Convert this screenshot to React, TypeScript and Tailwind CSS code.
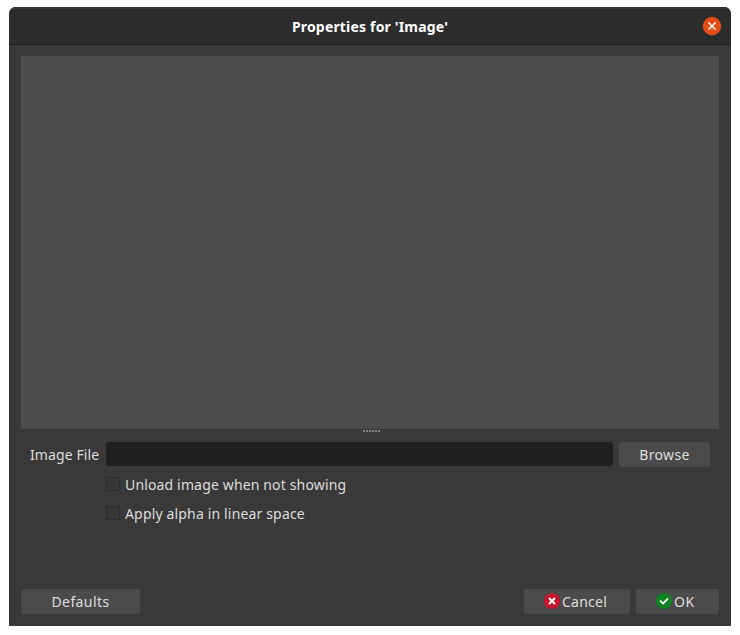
import type { ReactNode } from 'react';

function Button({ className, children }: { className: string; children: ReactNode }) {
  return (
    <button className={`flex h-[25px] shrink-0 items-center rounded-[3px] bg-[#4b4b4b] whitespace-nowrap ${className}`}>
      {children}
    </button>
  );
}

function CheckRow({ label, className }: { label: string; className: string }) {
  return (
    <label className="flex h-[29px] items-center">
      <span className="-mt-px mr-[5px] size-[14px] border border-[#2c2c2c] bg-[#373737]" />
      <span className={`whitespace-nowrap ${className}`}>{label}</span>
    </label>
  );
}

export default function App() {
  return (
    <div className="h-[635px] w-[740px] bg-white pt-[7px] pl-[9px] font-['Noto_Sans','Open_Sans',sans-serif] text-[14px] leading-5 text-[#dedede]">
      <div className="flex h-[619px] w-[722px] flex-col overflow-hidden rounded-t-[7px] bg-[#393939]">
        <header className="flex h-[38px] shrink-0 items-center justify-center border-t-2 border-b border-t-[#373737] border-b-[#212121] bg-[#2c2c2c]">
          <span className="w-[29px]" />
          <h1 className="flex-1 text-center text-[14px] font-bold tracking-[0.18px] text-white">
            Properties for 'Image'
          </h1>
          <button aria-label="Close" className="-mt-px mr-[9px] size-[20px]">
            <svg viewBox="0 0 20 20" className="size-[20px]">
              <circle cx="10" cy="10" r="9.2" fill="#e54c18" />
              <path d="M6.4 6.4l7.2 7.2M13.6 6.4l-7.2 7.2" stroke="#fff" strokeWidth="1.4" />
            </svg>
          </button>
        </header>

        <main className="flex flex-1 flex-col px-3 pt-[11px] pb-3">
          <div className="h-[373px] bg-[#4c4c4c]" />
          <div className="flex h-[13px] justify-center gap-px pt-px pl-[3px]">
            {[0, 1, 2, 3, 4, 5].map((i) => (
              <span key={i} className="size-[2px] bg-[#858585]" />
            ))}
          </div>

          <div className="flex items-start pr-[9px] pl-[9px]">
            <span className="w-[76px] pt-[3px] tracking-[0.1px] whitespace-nowrap">Image File</span>
            <div className="mr-[6px] h-[24px] flex-1 rounded-[3px] bg-[#1f1f1f]" />
            <Button className="w-[91px] justify-center tracking-[0.35px]">Browse</Button>
          </div>

          <div className="mt-[3px] ml-[85px]">
            <CheckRow label="Unload image when not showing" className="tracking-[0.15px]" />
            <CheckRow label="Apply alpha in linear space" className="tracking-[0.16px]" />
          </div>

          <footer className="mt-auto flex gap-[6px]">
            <Button className="mr-auto w-[119px] justify-center tracking-[0.4px]">Defaults</Button>
            <Button className="w-[106px] gap-[2px] pl-[20px] tracking-[0.25px]">
              <svg viewBox="0 0 16 16" className="-mt-px size-[16px]">
                <circle cx="8" cy="8" r="8" fill="#c7162b" />
                <path d="M5 5l6 6M11 5l-6 6" stroke="#fff" strokeWidth="2" />
              </svg>
              Cancel
            </Button>
            <Button className="w-[83px] gap-[2px] pl-[20px] tracking-[0.5px]">
              <svg viewBox="0 0 16 16" className="-mt-px size-[16px]">
                <circle cx="8" cy="8" r="8" fill="#0e8420" />
                <path d="M4 7.6l3 2.8 5-4.8" fill="none" stroke="#fff" strokeWidth="1.8" />
              </svg>
              OK
            </Button>
          </footer>
        </main>
      </div>
    </div>
  );
}
